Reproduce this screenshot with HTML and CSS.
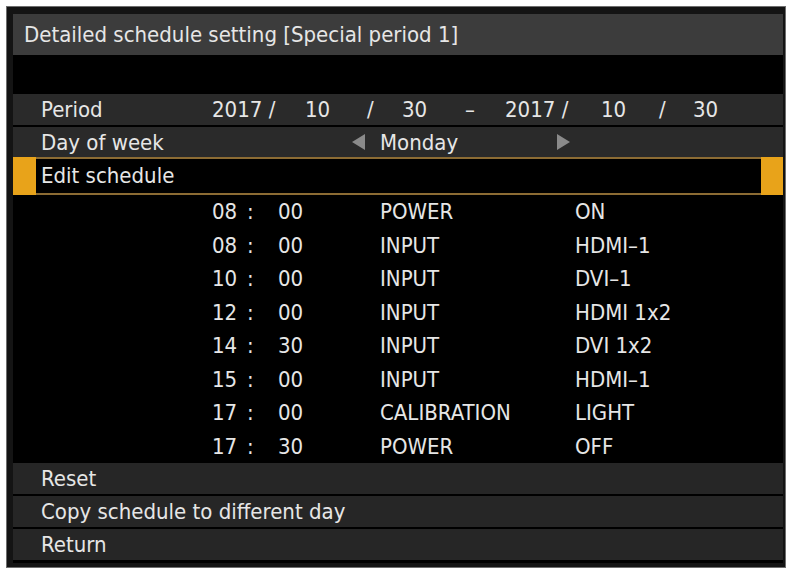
FILE: index.html
```html
<!DOCTYPE html>
<html lang="en">
<head>
    <meta charset="UTF-8">
    <meta name="viewport" content="width=device-width, initial-scale=1.0">
    <title>Detailed schedule setting</title>
    <link rel="stylesheet" href="styles.css">
</head>
<body>

<div class="screen">
    <div class="panel">
        <div class="title">Detailed schedule setting [Special period 1]</div>
        <div class="gap"></div>

        <div class="row period">
            <span class="label">Period</span>
            <span>2017 /</span>
            <span>10</span>
            <span>/</span>
            <span>30</span>
            <span>–</span>
            <span>2017 /</span>
            <span>10</span>
            <span>/</span>
            <span>30</span>
        </div>

        <div class="row day">
            <span class="label">Day of week</span>
            <span></span>
            <svg class="arrow" width="13" height="16" viewBox="0 0 13 16"><polygon points="13,0 13,16 0,8"/></svg>
            <span>Monday</span>
            <svg class="arrow" width="13" height="16" viewBox="0 0 13 16"><polygon points="0,0 0,16 13,8"/></svg>
        </div>

        <div class="row selected">
            <span class="mark"></span>
            <span class="label">Edit schedule</span>
            <span class="mark"></span>
        </div>

        <div class="schedule">
            <div class="entry"><span>08</span><span>:</span><span>00</span><span>POWER</span><span>ON</span></div>
            <div class="entry"><span>08</span><span>:</span><span>00</span><span>INPUT</span><span>HDMI–1</span></div>
            <div class="entry"><span>10</span><span>:</span><span>00</span><span>INPUT</span><span>DVI–1</span></div>
            <div class="entry"><span>12</span><span>:</span><span>00</span><span>INPUT</span><span>HDMI 1x2</span></div>
            <div class="entry"><span>14</span><span>:</span><span>30</span><span>INPUT</span><span>DVI 1x2</span></div>
            <div class="entry"><span>15</span><span>:</span><span>00</span><span>INPUT</span><span>HDMI–1</span></div>
            <div class="entry"><span>17</span><span>:</span><span>00</span><span>CALIBRATION</span><span>LIGHT</span></div>
            <div class="entry"><span>17</span><span>:</span><span>30</span><span>POWER</span><span>OFF</span></div>
        </div>

        <div class="row item"><span class="label">Reset</span></div>
        <div class="row item"><span class="label">Copy schedule to different day</span></div>
        <div class="row item"><span class="label">Return</span></div>
    </div>
</div>

</body>
</html>
```

FILE: styles.css
```css
body {
    margin: 0;
    background-color: #ffffff;
    font-family: "DejaVu Sans Condensed", "DejaVu Sans", sans-serif;
    font-size: 22px;
    color: #e6e6e6;
}

.screen {
    margin: 6px 0 0 6px;
    width: 780px;
    height: 562px;
    box-sizing: border-box;
    border: 1px solid #6e6e6e;
    background-color: #141414;
    padding: 7px 2px 4px 6px;
}

.panel {
    height: 100%;
    background-color: #000000;
    display: flex;
    flex-direction: column;
}

.title {
    height: 41px;
    line-height: 41px;
    padding-left: 11px;
    background-color: #3c3c3c;
}

.gap {height: 39px;}

.row {
    display: grid;
    align-items: center;
    height: 31px;
    margin-bottom: 2px;
    background-color: #2a2a2a;
}
.label {padding-left: 28px;}

.period {grid-template-columns: 199px 93px 62px 35px 63px 40px 96px 58px 34px 1fr;}

.day {
    height: 30px;
    margin-bottom: 0;
    grid-template-columns: 199px 140px 28px 177px 1fr;
}
.arrow {fill: #8a8a8a;}

.selected {
    height: 38px;
    margin-bottom: 0;
    background-color: #000000;
    grid-template-columns: 23px 1fr 22px;
    align-items: stretch;
}
.selected .label {
    padding-left: 5px;
    line-height: 34px;
    border-top: 2px solid #8c6c34;
    border-bottom: 2px solid #8c6c34;
}
.mark {background-color: #e8a31a;}

.schedule {
    display: flex;
    flex-direction: column;
    height: 268px;
}
.entry {
    display: grid;
    grid-template-columns: 199px 35px 31px 102px 195px 1fr;
    align-items: center;
    height: 33.5px;
}
.entry span:first-child {grid-column: 2;}

.item {background-color: #262626;}
.item:last-child {margin-bottom: 0;}
```
